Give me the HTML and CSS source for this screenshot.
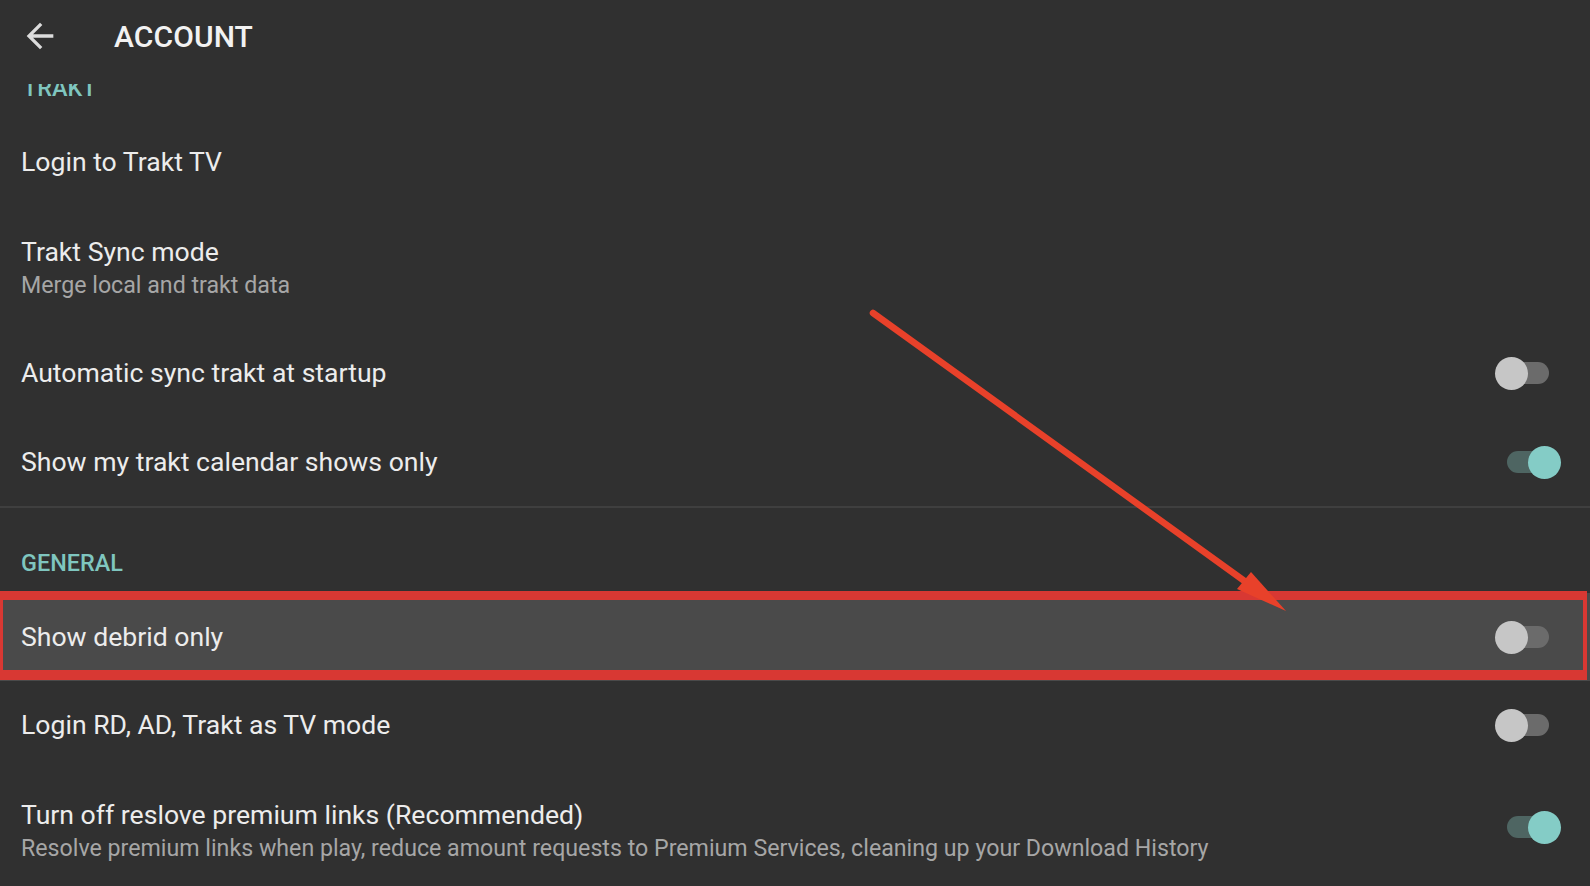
FILE: index.html
```html
<!DOCTYPE html>
<html lang="en">
<head>
<meta charset="utf-8">
<title>Account</title>
<link rel="stylesheet" href="styles.css">
</head>
<body>
<div class="screen">
  <header class="toolbar">
    <svg class="back" viewBox="0 0 24 24" width="40" height="40"><path d="M20 11H7.83l5.59-5.59L12 4l-8 8 8 8 1.41-1.41L7.83 13H20v-2z" fill="#dcdcdc"/></svg>
    <h1 class="title">ACCOUNT</h1>
  </header>
  <div class="viewport">
    <div class="list">
      <div class="category first">TRAKT</div>
      <div class="row r-login"><div class="texts"><div class="t">Login to Trakt TV</div></div></div>
      <div class="row two r-sync"><div class="texts"><div class="t">Trakt Sync mode</div><div class="s">Merge local and trakt data</div></div></div>
      <div class="row r-auto"><div class="texts"><div class="t">Automatic sync trakt at startup</div></div><div class="switch off"><div class="track"></div><div class="thumb"></div></div></div>
      <div class="row"><div class="texts"><div class="t">Show my trakt calendar shows only</div></div><div class="switch on"><div class="track"></div><div class="thumb"></div></div></div>
      <div class="divider"></div>
      <div class="category">GENERAL</div>
      <div class="row focused"><div class="texts"><div class="t">Show debrid only</div></div><div class="switch off"><div class="track"></div><div class="thumb"></div></div></div>
      <div class="row"><div class="texts"><div class="t">Login RD, AD, Trakt as TV mode</div></div><div class="switch off"><div class="track"></div><div class="thumb"></div></div></div>
      <div class="row two last"><div class="texts"><div class="t">Turn off reslove premium links (Recommended)</div><div class="s">Resolve premium links when play, reduce amount requests to Premium Services, cleaning up your Download History</div></div><div class="switch on up"><div class="track"></div><div class="thumb"></div></div></div>
    </div>
  </div>
  <svg class="annot" width="1590" height="886" viewBox="0 0 1590 886">
    <line x1="873" y1="313" x2="1250" y2="585" stroke="#e8412a" stroke-width="6.5" stroke-linecap="round"/>
    <polygon points="1286,611 1237,589 1251,572" fill="#e8412a"/>
  </svg>
</div>
</body>
</html>
```
FILE: styles.css
```css
*, *::before, *::after { box-sizing: border-box; }
html, body { margin: 0; padding: 0; }
body {
  background: #303030;
  font-family: Roboto, "Noto Sans", "Liberation Sans", sans-serif;
  color: #ececec;
  width: 1590px;
  height: 886px;
  overflow: hidden;
}
.screen {
  position: relative;
  width: 1590px;
  height: 886px;
  display: flex;
  flex-direction: column;
}
.toolbar {
  position: relative;
  z-index: 2;
  height: 84px;
  flex: none;
  background: #303030;
  display: flex;
  align-items: flex-start;
  padding: 16px 0 0 20px;
}
.back { display: block; }
.title {
  margin: 1px 0 0 54px;
  font-size: 30px;
  font-weight: 500;
  line-height: 40px;
  color: #f2f2f2;
  letter-spacing: 0.1px;
}
.viewport {
  flex: 1;
  overflow: hidden;
}
.list {
  margin-top: -52px;
}
.category {
  height: 85px;
  padding: 41px 0 0 21px;
  font-size: 23.4px;
  font-weight: 500;
  line-height: 28px;
  color: #7fc6bf;
}
.category.first { padding-left: 23px; padding-top: 42px; }
.row {
  position: relative;
  min-height: 88px;
  display: flex;
  align-items: center;
  justify-content: space-between;
  padding: 0 29px 0 21px;
}
.row.r-login { min-height: 90px; }
.row.two { min-height: 121px; }
.row.r-auto { min-height: 90px; }
.row.last { min-height: 124px; }
.texts { display: flex; flex-direction: column; }
.t {
  font-size: 26.6px;
  line-height: 34px;
  color: #ececec;
}
.s {
  font-size: 23.2px;
  line-height: 32px;
  color: #a6a6a6;
}
.divider {
  height: 2px;
  background: #3f3f3f;
}
.focused { background: #4a4a4a; }
.focused::after {
  content: "";
  position: absolute;
  top: -2px;
  left: 0;
  right: 3px;
  height: 89px;
  border-style: solid;
  border-color: #d83833;
  border-width: 9px 4px 10px 3px;
}
.switch {
  position: relative;
  width: 66px;
  height: 33px;
  display: flex;
  align-items: center;
}
.switch.up { margin-top: -8px; }
.track {
  width: 49px;
  height: 22px;
  border-radius: 11px;
}
.thumb {
  position: absolute;
  top: 0;
  width: 33px;
  height: 33px;
  border-radius: 50%;
}
.off .track { margin-left: 5px; background: #6b6b6b; }
.off .thumb { left: 0; background: #c6c6c6; }
.on .track { margin-left: 12px; background: #4e6562; }
.on .thumb { right: 0; background: #84ccc6; }
.annot {
  position: absolute;
  left: 0;
  top: 0;
  z-index: 3;
  pointer-events: none;
}
```
